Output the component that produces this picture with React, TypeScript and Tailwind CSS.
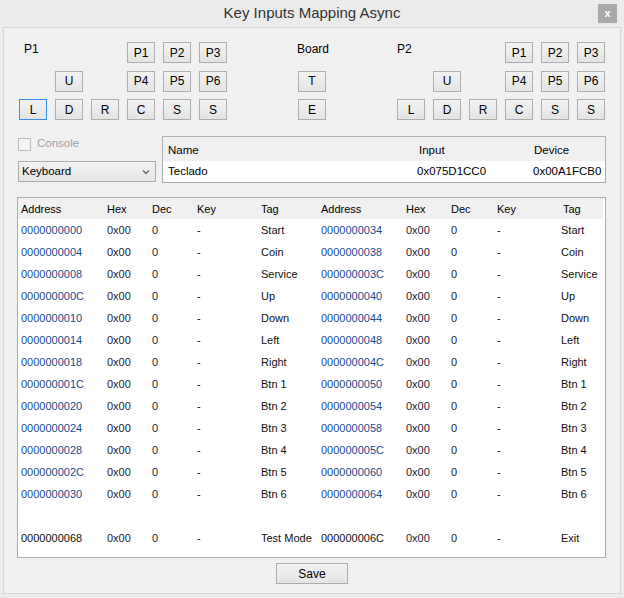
import React from "react";

const font = { fontFamily: '"Liberation Sans", Arial, sans-serif' };

type Row = { a1: string; t1: string; a2: string; t2: string };

const rows: Row[] = [
  { a1: "0000000000", t1: "Start", a2: "0000000034", t2: "Start" },
  { a1: "0000000004", t1: "Coin", a2: "0000000038", t2: "Coin" },
  { a1: "0000000008", t1: "Service", a2: "000000003C", t2: "Service" },
  { a1: "000000000C", t1: "Up", a2: "0000000040", t2: "Up" },
  { a1: "0000000010", t1: "Down", a2: "0000000044", t2: "Down" },
  { a1: "0000000014", t1: "Left", a2: "0000000048", t2: "Left" },
  { a1: "0000000018", t1: "Right", a2: "000000004C", t2: "Right" },
  { a1: "000000001C", t1: "Btn 1", a2: "0000000050", t2: "Btn 1" },
  { a1: "0000000020", t1: "Btn 2", a2: "0000000054", t2: "Btn 2" },
  { a1: "0000000024", t1: "Btn 3", a2: "0000000058", t2: "Btn 3" },
  { a1: "0000000028", t1: "Btn 4", a2: "000000005C", t2: "Btn 4" },
  { a1: "000000002C", t1: "Btn 5", a2: "0000000060", t2: "Btn 5" },
  { a1: "0000000030", t1: "Btn 6", a2: "0000000064", t2: "Btn 6" },
];

const cols = "grid grid-cols-[86px_45px_45px_64px_60px_85px_45px_46px_64px_1fr] pl-[3px]";

function Btn({ label, focused, className }: { label: string; focused?: boolean; className?: string }) {
  return (
    <button
      type="button"
      className={[
        "h-[21px] w-[28px] flex items-center justify-center text-[12px] text-black",
        "bg-gradient-to-b from-[#f2f2f2] to-[#e4e4e4]",
        focused ? "border border-[#3c8fe6]" : "border border-[#adadad]",
        className || "",
      ].join(" ")}
    >
      {label}
    </button>
  );
}

function PadGroup({ title, indent }: { title: string; indent?: boolean }) {
  return (
    <div className="grid grid-cols-[28px_28px_28px_28px_28px_28px] gap-x-[8px] gap-y-[7.5px]">
      <div className={["text-[12px] text-black leading-[14px]", indent ? "pl-[5px]" : ""].join(" ")}>{title}</div>
      <div />
      <div />
      <Btn label="P1" />
      <Btn label="P2" />
      <Btn label="P3" />
      <div />
      <Btn label="U" />
      <div />
      <Btn label="P4" />
      <Btn label="P5" />
      <Btn label="P6" />
      <Btn label="L" focused={title === "P1"} />
      <Btn label="D" />
      <Btn label="R" />
      <Btn label="C" />
      <Btn label="S" />
      <Btn label="S" />
    </div>
  );
}

function DataRow({ r, last }: { r: Row; last?: boolean }) {
  const addr = last ? "text-[#111]" : "text-[#1a4c8c]";
  return (
    <div className={[cols, "h-[22px] items-center text-[11px]"].join(" ")}>
      <div className={addr}>{r.a1}</div>
      <div className="text-[#1b2233]">0x00</div>
      <div className="text-[#1b2233]">0</div>
      <div className="text-[#111]">-</div>
      <div className="text-[#111] whitespace-nowrap">{r.t1}</div>
      <div className={addr}>{r.a2}</div>
      <div className="text-[#1b2233]">0x00</div>
      <div className="text-[#1b2233]">0</div>
      <div className="text-[#111]">-</div>
      <div className="text-[#111]">{r.t2}</div>
    </div>
  );
}

export default function App() {
  return (
    <div className="w-[624px] h-[598px] bg-[#ebebeb] flex flex-col" style={font}>
      {/* title bar */}
      <div className="h-[27px] relative flex items-center justify-center">
        <span className="text-[15px] text-[#333]">Key Inputs Mapping Async</span>
        <div className="absolute right-[7px] top-[4px] w-[19px] h-[19px] bg-[#a9a9a9] flex items-center justify-center text-white text-[11px] font-bold leading-none">
          x
        </div>
      </div>

      {/* panel */}
      <div className="ml-[3px] w-[618px] h-[567px] border border-[#d6d6d6] bg-[#f0f0f0] flex flex-col">
        {/* pads */}
        <div className="flex pl-[15px] pt-[14px]">
          <PadGroup title="P1" indent />
          <div className="ml-[71px] w-[28px] flex flex-col gap-y-[7.5px]">
            <div className="h-[21px] text-[12px] text-black -ml-[1px] leading-[14px] whitespace-nowrap">Board</div>
            <Btn label="T" />
            <Btn label="E" />
          </div>
          <div className="ml-[71px]">
            <PadGroup title="P2" />
          </div>
        </div>

        {/* input device row */}
        <div className="flex mt-[16px] pl-[14px]">
          <div className="w-[144px] flex flex-col">
            <div className="flex items-center h-[14px] mt-[1px]">
              <div className="w-[13px] h-[13px] border border-[#bcbcbc] bg-[#f4f4f4]" />
              <span className="ml-[6px] text-[11.5px] text-[#a0a0a0]">Console</span>
            </div>
            <div className="mt-[10px] w-[138px] h-[21px] border border-[#acacac] bg-gradient-to-b from-[#f2f2f2] to-[#e5e5e5] flex items-center pl-[3px] pr-[5px]">
              <span className="text-[11.5px] text-black flex-1">Keyboard</span>
              <svg width="8" height="6" viewBox="0 0 8 6">
                <path d="M1 1.5 L4 4.5 L7 1.5" stroke="#6d6d6d" strokeWidth="1.4" fill="none" />
              </svg>
            </div>
          </div>
          <div className="w-[444px] h-[47px] border border-[#adadad] flex flex-col">
            <div className="h-[24px] grid grid-cols-[250px_116px_1fr] pl-[5px] items-center text-[11.5px] text-black bg-[#f0f0f0] pt-[3px]">
              <div>Name</div>
              <div className="pl-[1px]">Input</div>
              <div>Device</div>
            </div>
            <div className="flex-1 bg-white grid grid-cols-[249px_116px_1fr] pl-[5px] items-center text-[11.5px] text-black">
              <div>Teclado</div>
              <div>0x075D1CC0</div>
              <div>0x00A1FCB0</div>
            </div>
          </div>
        </div>

        {/* mapping table */}
        <div className="mt-[14px] ml-[13px] w-[589px] h-[361px] border border-[#adadad] bg-white flex flex-col">
          <div className={[cols, "h-[21px] items-center text-[11px] text-black bg-[#f0f0f0] mr-[2px] pt-[2px]"].join(" ")}>
            <div>Address</div>
            <div>Hex</div>
            <div>Dec</div>
            <div>Key</div>
            <div>Tag</div>
            <div>Address</div>
            <div>Hex</div>
            <div>Dec</div>
            <div>Key</div>
            <div className="pl-[2px]">Tag</div>
          </div>
          {rows.map((r) => (
            <DataRow key={r.a1} r={r} />
          ))}
          <div className="h-[22px]" />
          <DataRow r={{ a1: "0000000068", t1: "Test Mode", a2: "000000006C", t2: "Exit" }} last />
        </div>

        {/* save */}
        <div className="flex justify-center mt-[5px]">
          <button
            type="button"
            className="w-[72px] h-[21px] border border-[#adadad] bg-gradient-to-b from-[#f2f2f2] to-[#e4e4e4] text-[12px] text-black"
          >
            Save
          </button>
        </div>
      </div>
    </div>
  );
}
